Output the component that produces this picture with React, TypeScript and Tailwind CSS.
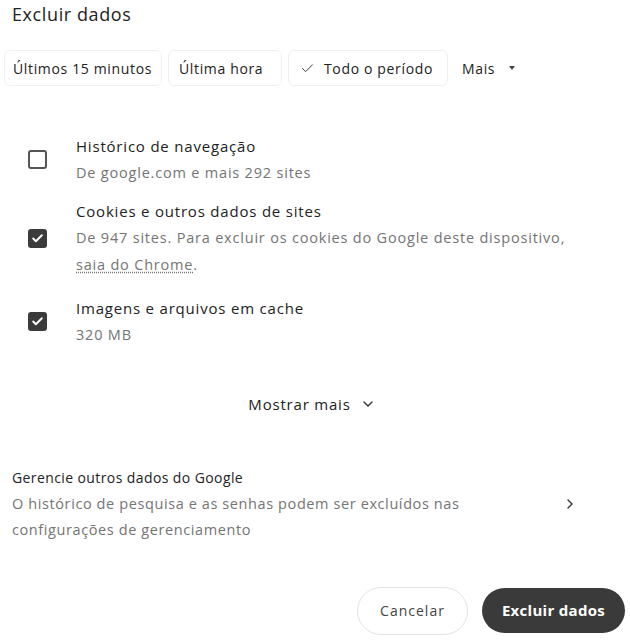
import { Check, ChevronDown, ChevronRight } from "lucide-react";

interface ItemProps {
  checked: boolean;
  title: string;
  className?: string;
  children: React.ReactNode;
}

const Item = ({ checked, title, className, children }: ItemProps) => {
  return (
    <div className={"flex items-center " + (className ?? "")}>
      <div className="w-[76px] pl-[28px] shrink-0">
        {checked ? (
          <div className="w-[19px] h-[19px] rounded-[3px] bg-[#3b3b3b] flex items-center justify-center">
            <Check size={13} strokeWidth={3.5} className="text-white" />
          </div>
        ) : (
          <div className="w-[19px] h-[19px] rounded-[3px] border-2 border-[#555]"></div>
        )}
      </div>
      <div>
        <div className="text-[15px] tracking-[0.8px] text-[#222] leading-[26px]">{title}</div>
        <div className="text-[14.5px] tracking-[0.8px] text-[#747474] leading-[27px]">{children}</div>
      </div>
    </div>
  );
};

export default function App() {
  return (
    <div className="w-[630px] h-[642px] bg-white font-['Open_Sans',sans-serif]">
      <h1 className="pl-3 pt-[2px] text-[18px] tracking-[0.6px] text-[#222] leading-[24px]">Excluir dados</h1>

      {/* Time range chips */}
      <div className="flex items-center gap-[6px] pl-[4px] mt-[23px] h-[38px] text-[14px] tracking-[0.65px] text-[#222] whitespace-nowrap">
        <div className="w-[158px] shrink-0 pl-[8px] h-[36px] flex items-center border border-[#f0f0f0] rounded-md">
          Últimos 15 minutos
        </div>
        <div className="w-[114px] shrink-0 px-[10px] h-[36px] flex items-center border border-[#f0f0f0] rounded-md">
          Última hora
        </div>
        <div className="w-[160px] shrink-0 px-[11px] h-[36px] flex items-center border border-[#f0f0f0] rounded-md">
          <Check size={15} strokeWidth={1.5} className="text-[#333] mr-[9px]" />
          Todo o período
        </div>
        <div className="px-[8px] h-[36px] flex items-center">
          Mais
          <span className="ml-[14px] w-0 h-0 border-l-[3px] border-r-[3px] border-t-[4px] border-l-transparent border-r-transparent border-t-[#444]"></span>
        </div>
      </div>

      <div className="flex flex-col mt-[46px]">
        <Item checked={false} title="Histórico de navegação">
          De google.com e mais 292 sites
        </Item>
        <Item checked title="Cookies e outros dados de sites" className="mt-[12px]">
          De 947 sites. Para excluir os cookies do Google deste dispositivo,
          <br />
          <span className="underline decoration-dotted underline-offset-2">saia do Chrome</span>.
        </Item>
        <Item checked title="Imagens e arquivos em cache" className="mt-[17px]">
          320 MB
        </Item>
      </div>

      <div className="flex justify-center items-center mt-[45px] pr-[6px] text-[15px] tracking-[0.8px] text-[#222]">
        Mostrar mais
        <ChevronDown size={16} strokeWidth={2} className="ml-[9px] text-[#333]" />
      </div>

      {/* Manage other Google data */}
      <div className="flex items-center mt-[49px] pl-3 pr-[52px]">
        <div className="flex-1">
          <div className="text-[14px] tracking-[0.4px] text-[#222] leading-[26px]">Gerencie outros dados do Google</div>
          <div className="text-[14.5px] tracking-[0.6px] text-[#747474] leading-[26.5px] w-[490px]">
            O histórico de pesquisa e as senhas podem ser excluídos nas configurações de gerenciamento
          </div>
        </div>
        <ChevronRight size={16} strokeWidth={2} className="text-[#333]" />
      </div>

      <div className="flex justify-end items-center gap-[14px] mt-[43px] pr-[5px]">
        <button className="h-[48px] w-[111px] rounded-full border border-[#e4e4e4] text-[14px] tracking-[1px] text-[#444]">
          Cancelar
        </button>
        <button className="h-[45px] w-[143px] rounded-full bg-[#3a3a3a] text-[15px] tracking-[0.3px] font-bold text-white">
          Excluir dados
        </button>
      </div>
    </div>
  );
}
